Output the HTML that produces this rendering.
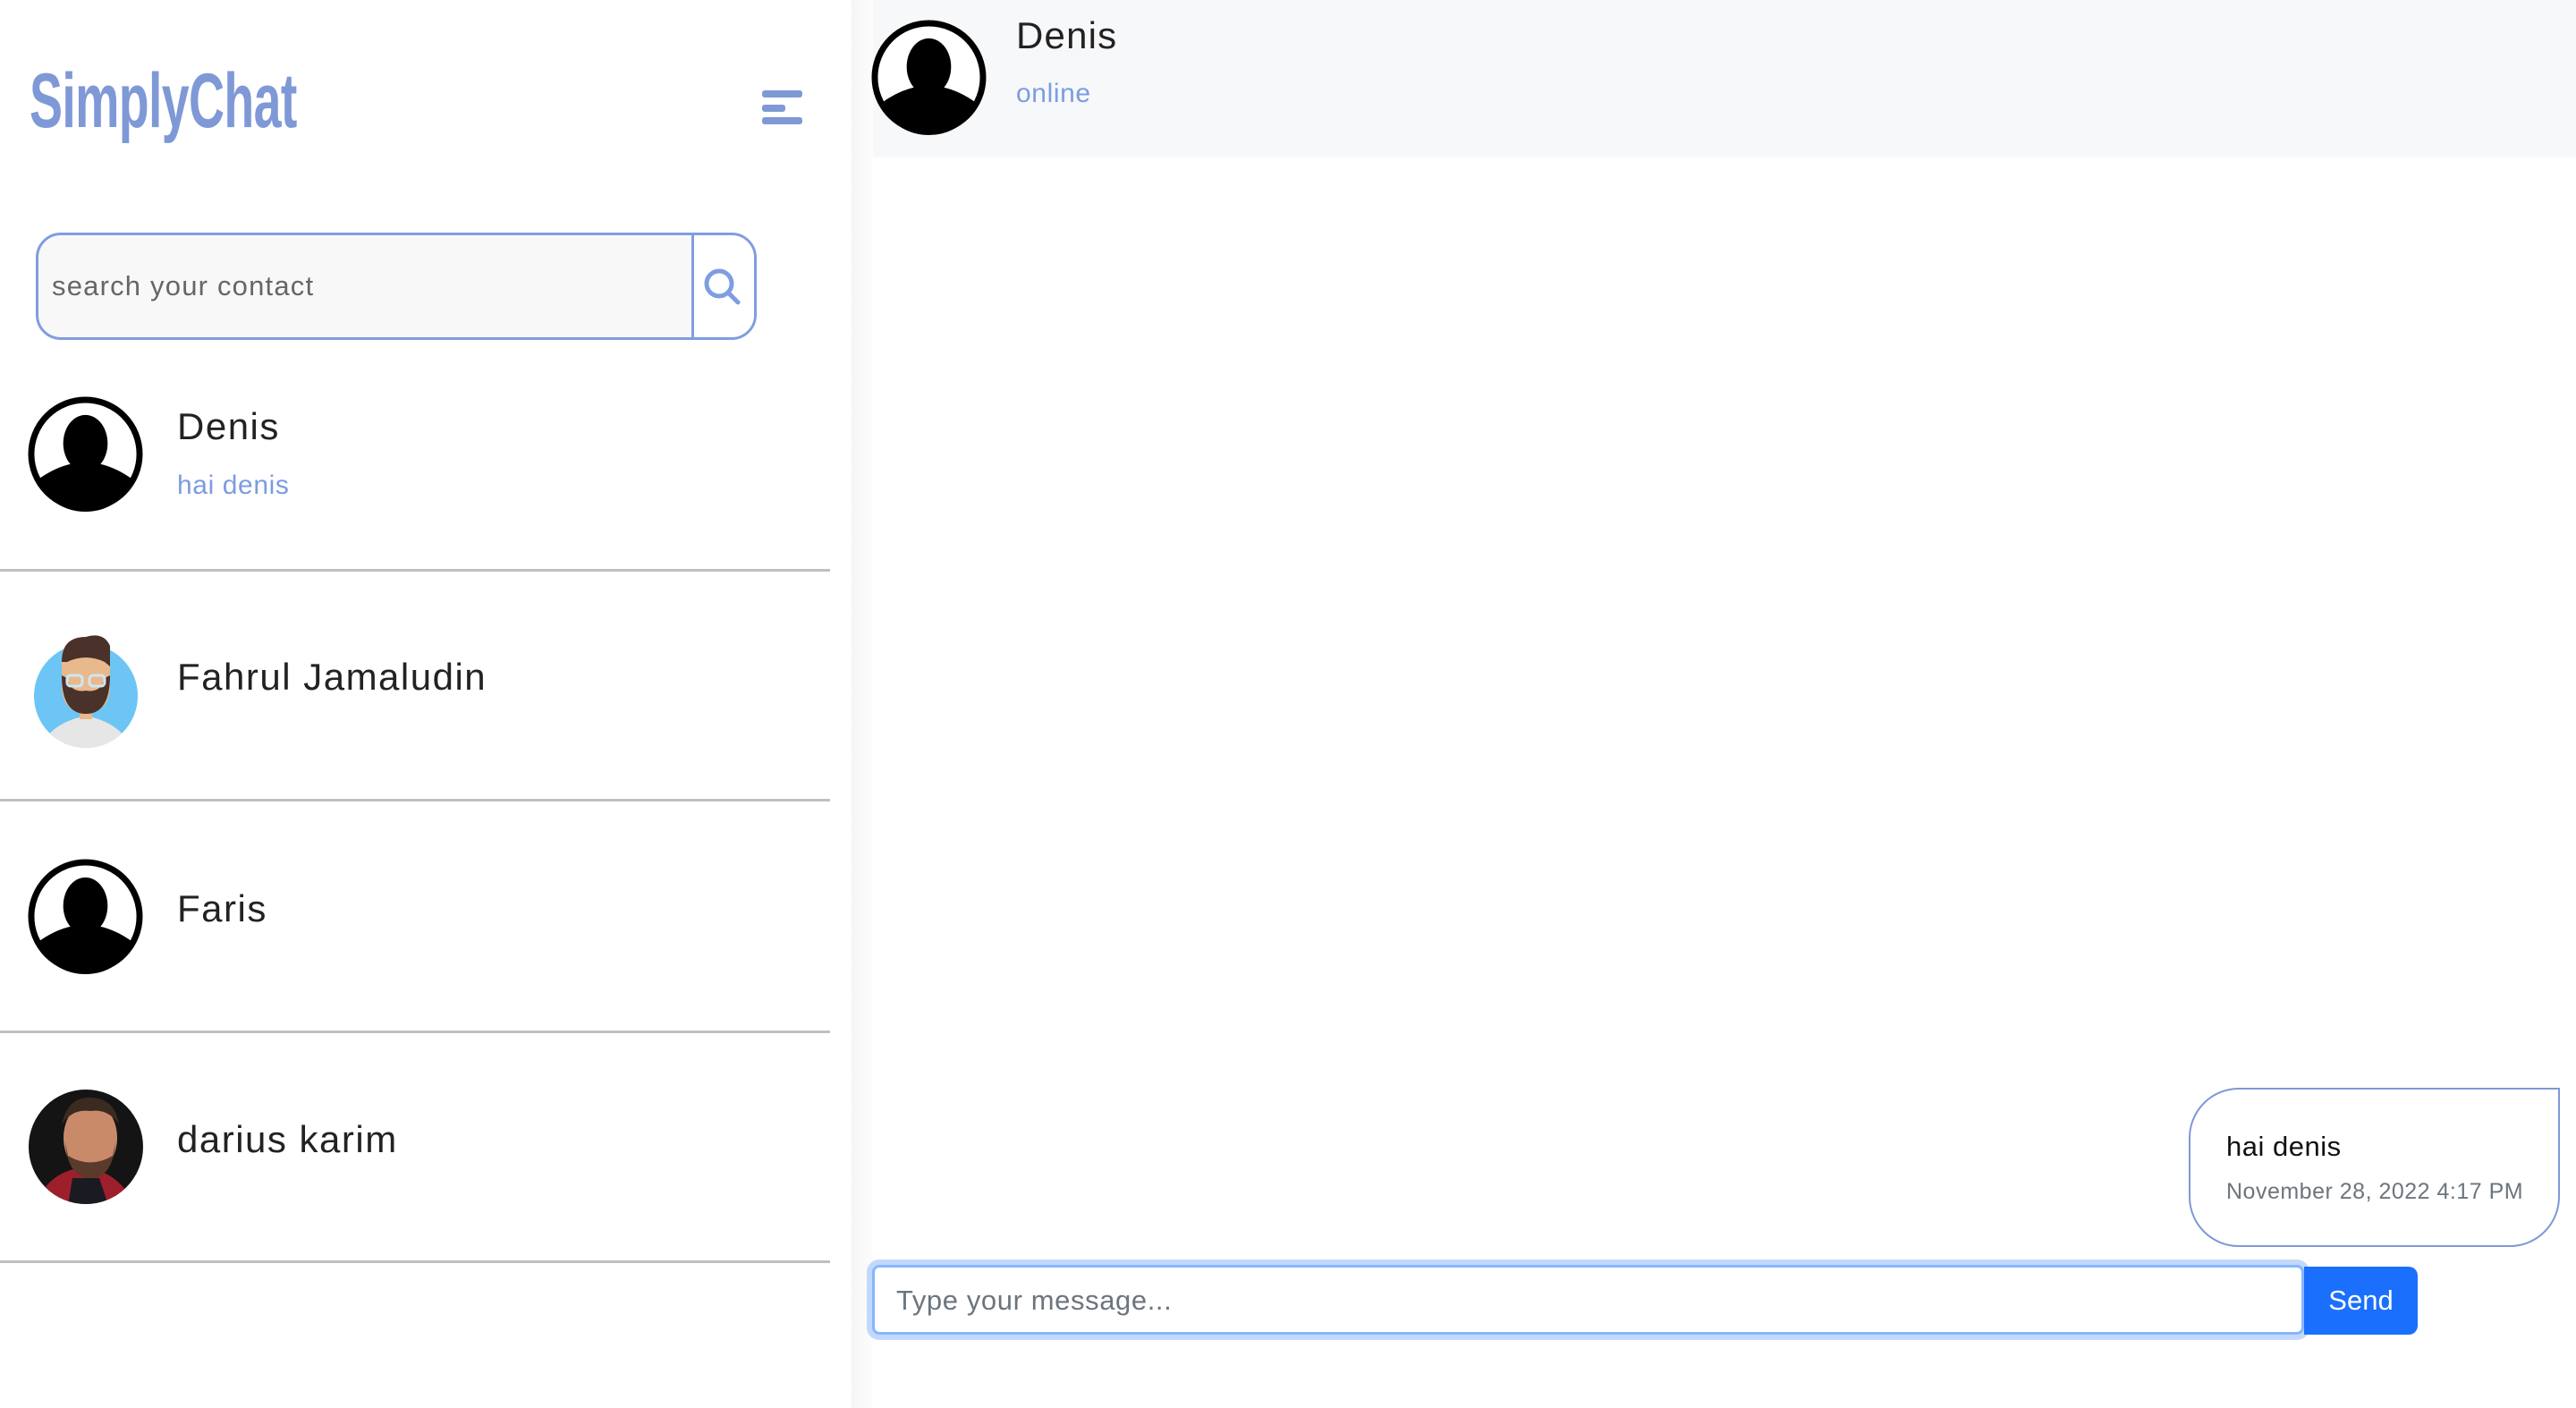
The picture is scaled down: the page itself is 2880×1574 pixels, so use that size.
<!DOCTYPE html>
<html><head><meta charset="utf-8"><style>
*{margin:0;padding:0;box-sizing:border-box}
body{width:2880px;height:1574px;background:#fff;font-family:"Liberation Sans",sans-serif;position:relative;overflow:hidden}
.abs{position:absolute}
.logo{left:33px;top:64px;font-size:86px;font-weight:bold;color:#7f98d6;transform:scaleX(0.645);transform-origin:left top;letter-spacing:-1px;white-space:nowrap}
.hb{background:#7f98d6;height:8px;border-radius:3px;left:852px}
.search{left:40px;top:260px;width:806px;height:120px;border:3px solid #7f9de0;border-radius:28px;background:#f8f8f8;overflow:hidden}
.search .div{position:absolute;left:730px;top:0;width:76px;height:100%;background:#fff;border-left:3px solid #7f9de0}
.ph{left:58px;top:302px;font-size:31px;color:#666;letter-spacing:1.2px}
.line{left:0;width:928px;height:3px;background:#c0c0c0}
.name{left:198px;font-size:42px;color:#222;letter-spacing:1.5px}
.sub{font-size:30px;color:#7b9de0;letter-spacing:0.6px}
.grad{left:952px;top:0;width:24px;height:1574px;background:linear-gradient(90deg,#f5f5f5,#fdfdfd)}
</style></head><body>
<div class="abs grad"></div>
<div class="abs logo">SimplyChat</div>
<div class="abs hb" style="top:101px;width:45px"></div>
<div class="abs hb" style="top:117px;width:26px"></div>
<div class="abs hb" style="top:131px;width:45px"></div>
<div class="abs search"><div class="div"></div></div>
<div class="abs ph">search your contact</div>
<svg class="abs" style="left:785px;top:298px" width="46" height="46" viewBox="0 0 46 46"><circle cx="19" cy="19" r="14" fill="none" stroke="#7f9de0" stroke-width="5"/><line x1="29" y1="29" x2="40" y2="40" stroke="#7f9de0" stroke-width="5" stroke-linecap="round"/></svg>

<svg width="0" height="0" style="position:absolute"><defs><symbol id="def" viewBox="0 0 130 130"><circle cx="65" cy="65" r="61" fill="#fff" stroke="#000" stroke-width="7"/><ellipse cx="65" cy="53" rx="25" ry="32" fill="#000"/><path d="M10 95 Q30 80 50 76 Q65 90 80 76 Q100 80 120 95 Q100 130 65 130 Q30 130 10 95Z" fill="#000"/></symbol></defs></svg>

<svg class="abs" style="left:31px;top:443px" width="129" height="129"><use href="#def"/></svg>
<div class="abs name" style="top:453px">Denis</div>
<div class="abs sub" style="left:198px;top:526px">hai denis</div>
<div class="abs line" style="top:636px"></div>

<svg class="abs" style="left:31px;top:700px" width="130" height="140" viewBox="0 0 130 140">
<defs><clipPath id="c1"><circle cx="65" cy="78" r="58"/></clipPath></defs>
<circle cx="65" cy="78" r="58" fill="#6cc5f5"/>
<g clip-path="url(#c1)"><path d="M15 140 Q20 110 65 100 Q110 110 115 140Z" fill="#e6e6e6"/></g>
<rect x="58" y="88" width="14" height="16" fill="#e8b98d"/>
<path d="M38 35 Q40 12 65 12 Q88 10 92 35 L92 70 Q90 96 65 98 Q40 96 38 70Z" fill="#e8b98d"/>
<path d="M38 40 Q38 12 65 12 Q85 6 92 22 L92 45 L86 40 Q65 30 44 40Z" fill="#4a322a"/>
<path d="M38 55 L44 58 Q48 75 65 72 Q82 75 86 58 L92 55 Q92 98 65 98 Q38 98 38 55Z" fill="#4a322a"/>
<rect x="44" y="55" width="17" height="12" rx="4" fill="none" stroke="#cfe6f0" stroke-width="3"/><rect x="69" y="55" width="17" height="12" rx="4" fill="none" stroke="#cfe6f0" stroke-width="3"/>
</svg>
<div class="abs name" style="top:733px">Fahrul Jamaludin</div>
<div class="abs line" style="top:893px"></div>

<svg class="abs" style="left:31px;top:960px" width="129" height="129"><use href="#def"/></svg>
<div class="abs name" style="top:992px">Faris</div>
<div class="abs line" style="top:1152px"></div>

<svg class="abs" style="left:31px;top:1217px" width="130" height="130" viewBox="0 0 130 130">
<defs><clipPath id="c2"><circle cx="65" cy="65" r="64"/></clipPath></defs>
<g clip-path="url(#c2)"><rect width="130" height="130" fill="#141414"/>
<path d="M10 130 Q20 95 60 88 Q100 90 120 130Z" fill="#9e1f2c"/>
<path d="M45 130 L50 100 L80 100 L90 130Z" fill="#1a1a22"/>
<ellipse cx="70" cy="55" rx="30" ry="40" fill="#c98a6a"/>
<path d="M42 60 Q45 100 70 100 Q95 100 98 60 L95 75 Q70 90 45 75Z" fill="#5a3a2a"/>
<path d="M38 40 Q45 8 72 10 Q98 12 102 40 Q90 22 70 25 Q50 22 38 40Z" fill="#3a2a20"/></g>
</svg>
<div class="abs name" style="top:1250px">darius karim</div>
<div class="abs line" style="top:1409px"></div>

<div class="abs" style="left:976px;top:0;width:1904px;height:176px;background:#f7f8fa"></div>
<svg class="abs" style="left:974px;top:22px" width="129" height="129"><use href="#def"/></svg>
<div class="abs" style="left:1136px;top:16px;font-size:42px;color:#222;letter-spacing:1.2px">Denis</div>
<div class="abs sub" style="left:1136px;top:88px">online</div>

<div class="abs" style="left:2447px;top:1216px;width:415px;height:178px;border:2px solid #7f98d6;border-radius:56px 0 56px 56px;background:#fff"></div>
<div class="abs" style="left:2489px;top:1264px;font-size:31px;color:#111;letter-spacing:0.5px">hai denis</div>
<div class="abs" style="left:2489px;top:1318px;font-size:25px;color:#6c757d;letter-spacing:0.5px">November 28, 2022 4:17 PM</div>

<div class="abs" style="left:969px;top:1408px;width:1613px;height:90px;background:#c3d8fb;border-radius:14px"></div>
<div class="abs" style="left:975px;top:1414px;width:1601px;height:78px;background:#fff;border:3px solid #86b7fe;border-radius:8px"></div>
<div class="abs" style="left:1002px;top:1436px;font-size:31px;color:#6c757d;letter-spacing:0.6px">Type your message...</div>
<div class="abs" style="left:2576px;top:1416px;width:127px;height:76px;background:#1a6ffd;border-radius:0 10px 10px 0;color:#fff;font-size:31px;text-align:center;line-height:76px">Send</div>
</body></html>
